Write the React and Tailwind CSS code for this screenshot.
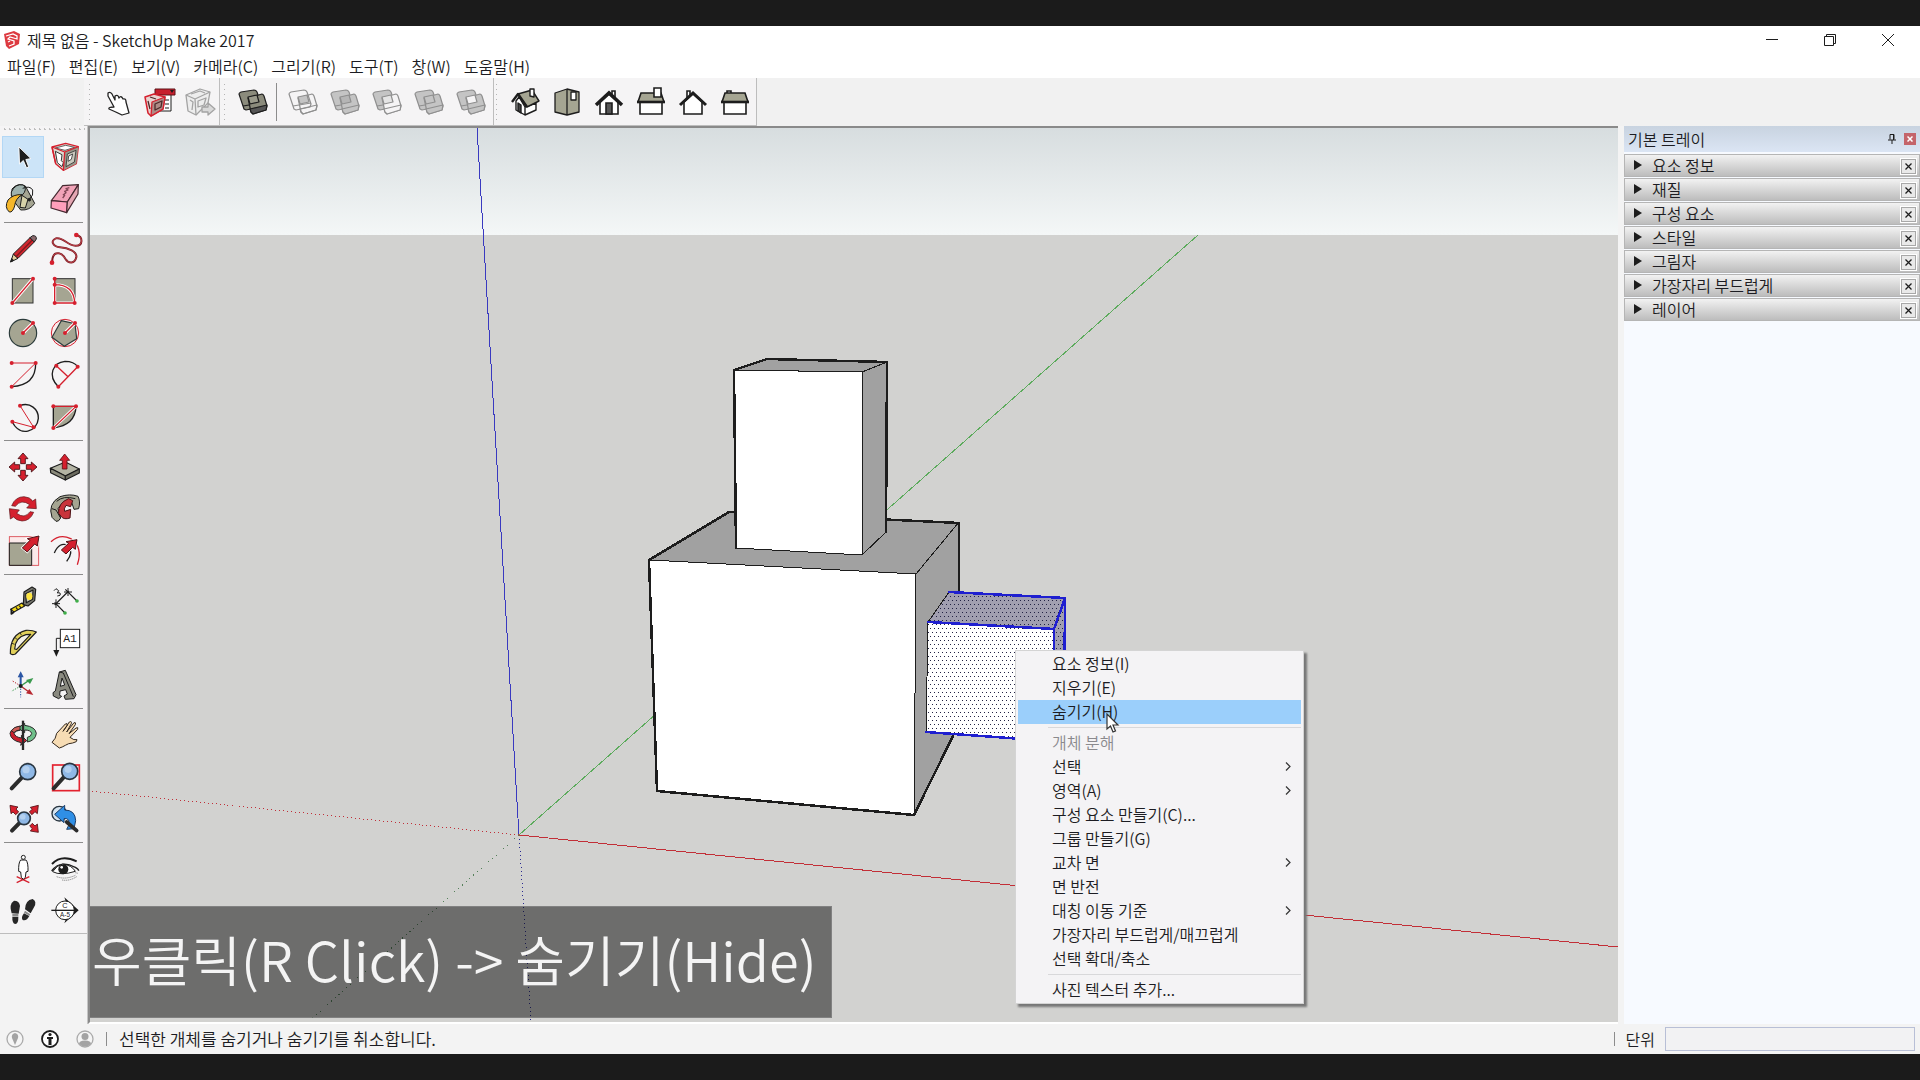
import React from "react";

const RED = "#d5202e";
const INK = "#1d1d1d";
const CLAY = "#a5a592";

/* ---------- Left palette glyphs (drawing units: 3 per pixel) ---------- */

function Dots({ at, r = 6 }) {
  return at.map(([x, y]) => <circle key={x + "-" + y} cx={x} cy={y} r={r} fill={RED} />);
}

const SelectGlyph = (
  <path d="M56 79L58 133L70 122L80 145L87 142L78 119L94 116Z" fill={INK} stroke="#fff" strokeWidth="3" />
);
const ComponentGlyph = (
  <g strokeLinejoin="round">
    <path d="M156 81L197 70L235 80L229 131L190 151L167 131Z" fill="#dddcd2" stroke={RED} strokeWidth="4" />
    <path d="M166 84L197 76L224 82L195 91Z" fill="#fff" stroke="#444" strokeWidth="2.500" />
    <path d="M194 96L235 80L229 131L190 151Z" fill="#97978a" />
    <path d="M202 102L228 91L223 126L198 140Z" fill="#c9c8bd" stroke="#333" strokeWidth="2.500" />
    <path d="M166 94L186 104L184 122L190 128L186 140L172 128Z" fill="#fff" stroke="#333" strokeWidth="3" />
    <path d="M206 108L218 102L214 118L204 124Z" fill="#fff" stroke="#333" strokeWidth="2.500" />
    <path d="M156 81L194 96L235 80M194 96L190 151M156 81L167 131" fill="none" stroke={RED} strokeWidth="4" />
  </g>
);
const PaintGlyph = (
  <g stroke={INK} strokeWidth="3" strokeLinejoin="round">
    <path d="M36 207Q54 186 76 198L104 250Q90 272 62 270L36 236Z" fill="#a5a592" />
    <path d="M34 216Q46 190 70 195Q84 208 66 226Q48 236 34 228Z" fill="#9fb2ae" />
    <path d="M24 240Q40 222 66 224Q46 236 44 258Q38 278 28 276Q12 262 24 240Z" fill="#f5b72b" />
    <path d="M66 226L84 238L76 264L60 262Z" fill="#d6d1a8" />
    <path d="M68 205Q90 196 98 210Q102 226 88 238" fill="none" />
    <circle cx="88" cy="239" r="4" fill={INK} />
  </g>
);
const EraserGlyph = (
  <g stroke="#44282f" strokeWidth="3.500" strokeLinejoin="round">
    <path d="M154 242L188 197L235 194L202 246Z" fill="#f2a3b8" />
    <path d="M154 242L202 246L200 278L153 264Z" fill="#ff9fbb" />
    <path d="M202 246L235 194L234 222L200 278Z" fill="#e5a7b3" />
    <path d="M188 234L194 226L190 224L198 218L194 214L204 210L198 206L208 203" fill="none" stroke="#7e4654" strokeWidth="4" />
  </g>
);
const PencilGlyph = (
  <g stroke={INK} strokeWidth="3" strokeLinejoin="round">
    <path d="M32 426L40 402L54 415Z" fill="#e5cf9c" />
    <path d="M40 402L90 353L103 366L54 415Z" fill="#d0262e" />
    <path d="M48 410L97 360" stroke="#7d1a1f" strokeWidth="4" />
    <path d="M90 353L98 347Q110 346 109 357L103 366Z" fill="#8a6a6d" />
    <path d="M32 426L35 416L41 421Z" fill={INK} />
  </g>
);
const FreehandGlyph = (
  <g>
    <path d="M229 345C250 350 250 378 226 377C200 376 190 350 168 355C150 362 158 380 180 382C205 384 232 395 229 412C224 432 206 432 196 416C186 398 166 394 160 408C156 416 157 422 156 428" fill="none" stroke="#7c1d24" strokeWidth="6" />
    <path d="M229 345C250 350 250 378 226 377C200 376 190 350 168 355C150 362 158 380 180 382C205 384 232 395 229 412C224 432 206 432 196 416C186 398 166 394 160 408" fill="none" stroke="#d9535b" strokeWidth="2" />
    <Dots at={[[229, 345], [156, 428]]} r={7} />
  </g>
);
const LineGlyph = (
  <g>
    <rect x="37" y="476" width="62" height="73" fill={CLAY} stroke="#333" strokeWidth="3" />
    <path d="M37 549L99 476" stroke="#fff" strokeWidth="10" />
    <path d="M37 549L99 476" stroke={RED} strokeWidth="4" />
    <Dots at={[[37, 549], [99, 476]]} />
  </g>
);
const RectGlyph = (
  <g fill="none">
    <rect x="164" y="476" width="61" height="73" fill={CLAY} stroke="#333" strokeWidth="3" />
    <path d="M164 494Q222 494 224 549H164Z" stroke="#fff" strokeWidth="9" />
    <path d="M164 476V549H224Q222 494 164 494" stroke={RED} strokeWidth="4" />
    <Dots at={[[164, 476], [164, 494], [164, 549], [224, 549]]} />
  </g>
);
const CircleGlyph = (
  <g>
    <circle cx="69" cy="639" r="41" fill={CLAY} stroke="#2b3b3b" strokeWidth="3.500" />
    <path d="M69 639L99 609" stroke="#fff" strokeWidth="10" />
    <path d="M69 639L99 609" stroke={RED} strokeWidth="4" />
    <Dots at={[[69, 639], [99, 609]]} />
  </g>
);
const PolygonGlyph = (
  <g>
    <circle cx="195" cy="639" r="41" fill="#fbecec" stroke={RED} strokeWidth="3" />
    <path d="M184 602L225 611L230 656L193 679L156 652Z" fill={CLAY} stroke="#2b3b3b" strokeWidth="3.500" />
    <path d="M195 639L225 609" stroke="#fff" strokeWidth="10" />
    <path d="M195 639L225 609" stroke={RED} strokeWidth="4" />
    <Dots at={[[195, 639], [225, 609]]} />
  </g>
);
const ArcGlyph = (
  <g fill="none">
    <path d="M107 729Q108 796 35 800" stroke={INK} strokeWidth="4" />
    <path d="M35 729H107L35 800" stroke={RED} strokeWidth="3" />
    <Dots at={[[35, 729], [107, 729], [35, 800]]} />
  </g>
);
const Arc2Glyph = (
  <g fill="none">
    <path d="M175 800C140 765 160 728 195 724Q222 724 233 740" stroke={INK} strokeWidth="4" />
    <path d="M175 800L233 740M169 737L204 770" stroke={RED} strokeWidth="4" />
    <Dots at={[[175, 800], [233, 740], [169, 737]]} />
  </g>
);
const Arc3Glyph = (
  <g fill="none">
    <path d="M60 857C90 845 116 868 115 895C112 936 60 952 37 906" stroke={INK} strokeWidth="4" />
    <path d="M60 857L101 922L37 905" stroke={RED} strokeWidth="3" />
    <Dots at={[[60, 857], [101, 922], [37, 905]]} />
  </g>
);
const PieGlyph = (
  <g>
    <path d="M160 859H228Q226 916 160 924Z" fill={CLAY} stroke={INK} strokeWidth="4" />
    <path d="M160 924L228 859" stroke="#fff" strokeWidth="9" />
    <path d="M160 859H228L160 924" stroke={RED} strokeWidth="3.500" fill="none" />
    <Dots at={[[160, 859], [228, 859], [160, 924]]} />
  </g>
);
const MoveGlyph = (
  <g fill={RED} stroke="#3d0c10" strokeWidth="2.500">
    {[0, 90, 180, 270].map((a) => (
      <path key={a} transform={`rotate(${a} 69 111)`} d="M69 69L84 86H76V101H62V86H54Z" />
    ))}
  </g>
);
const PushGlyph = (
  <g stroke={INK} strokeWidth="3.500" strokeLinejoin="round">
    <path d="M151 115L196 96L238 117L196 138Z" fill="#b4b4a4" />
    <path d="M151 115L196 138V150L152 128Z" fill="#8b8b7c" />
    <path d="M196 138L238 117V129L196 150Z" fill="#6c6c60" />
    <path d="M194 72L209 91H201V117H187V91H179Z" fill={RED} stroke="#5b1217" strokeWidth="2.500" />
  </g>
);
const RotateGlyph = (
  <g fill={RED} stroke="#5b1217" strokeWidth="2">
    <path d="M35 227Q46 200 72 200Q90 201 98 213L107 207L109 236L80 234L89 224Q64 206 46 229Z" />
    <path d="M101 247Q90 273 66 273Q48 271 41 261L31 267L28 236L58 240L50 250Q74 268 90 245Z" />
  </g>
);
const FollowGlyph = (
  <g stroke={INK} strokeWidth="3" strokeLinejoin="round">
    <path d="M156 262Q142 222 180 200Q210 190 234 199Q242 214 236 236L222 238L214 214Q188 212 174 236L182 264Q176 276 168 274Z" fill="#a5a592" />
    <path d="M170 214Q190 196 226 206M156 236L168 240L182 264" fill="none" />
    <path d="M176 250Q174 218 206 206L218 212L212 230L198 226Q190 238 194 244L212 238L210 264Q192 270 184 260Z" fill="#c9343b" stroke="#4d1115" strokeWidth="3" />
  </g>
);
const ScaleGlyph = (
  <g>
    <rect x="28" y="320" width="88" height="86" fill="#fbeaea" stroke="#d9434c" strokeWidth="2.500" />
    <path d="M28 339H95V406H28Z" fill={CLAY} stroke={INK} strokeWidth="3" />
    <path d="M117 318L112 348L104 342L82 366L67 354L90 331L82 326Z" fill={RED} stroke="#fff" strokeWidth="7" />
    <path d="M117 318L112 348L104 342L82 366L67 354L90 331L82 326Z" fill={RED} stroke="#4d1115" strokeWidth="3" />
  </g>
);
const OffsetGlyph = (
  <g fill="none">
    <path d="M153 335Q180 310 212 326Q250 352 232 404" stroke={RED} strokeWidth="4" />
    <path d="M163 369Q178 334 204 346Q222 366 200 394" stroke={INK} strokeWidth="4" />
    <path d="M231 329L226 358L218 352L198 372L184 360L206 340L198 335Z" fill={RED} stroke="#fff" strokeWidth="7" />
    <path d="M231 329L226 358L218 352L198 372L184 360L206 340L198 335Z" fill={RED} stroke="#4d1115" strokeWidth="3" />
  </g>
);
const TapeGlyph = (
  <g stroke={INK} strokeWidth="3.500" strokeLinejoin="round">
    <path d="M72 486L96 471L107 478L104 512L84 528L70 524Z" fill="#77776e" />
    <path d="M77 491L99 480L98 508L79 518Z" fill="#c8c8bc" />
    <ellipse cx="88" cy="499" rx="9" ry="11" fill="#ffe640" stroke="none" />
    <path d="M32 538L66 519L74 528L42 546Z" fill="#f2d818" />
    <path d="M34 536V552L42 546" fill="none" strokeWidth="5" />
    <path d="M48 532L53 539M58 527L63 534" />
  </g>
);
const DimensionGlyph = (
  <g fill="none" stroke={INK} strokeWidth="3.500">
    <path d="M164 525L206 483M164 517L195 549M196 478L231 513" />
    <path d="M156 521H180M168 508V534M192 486H216M204 474V498" strokeWidth="3" />
    <path d="M162 482L168 476L176 482L172 489Q184 486 180 496L172 498" strokeWidth="3" />
    <circle cx="195" cy="549" r="5.500" fill="#3fae49" stroke="none" />
    <circle cx="231" cy="513" r="5.500" fill="#3fae49" stroke="none" />
  </g>
);
const ProtractorGlyph = (
  <g stroke={INK} strokeWidth="3.500" strokeLinejoin="round">
    <path d="M31 671Q30 612 78 601Q98 600 109 606L46 672Q36 676 31 671Z" fill="#e0cf5a" />
    <path d="M44 657Q46 622 78 614L92 613L50 658Z" fill="#f4f1ea" />
    <path d="M36 640L44 643M44 622L51 628M60 608L64 615" strokeWidth="2.500" />
  </g>
);
const TextGlyph = (
  <g>
    <rect x="181" y="598" width="58" height="55" fill="#fff" stroke={INK} strokeWidth="3" />
    <text x="210" y="636" textAnchor="middle" fontSize="34" fontFamily="Liberation Mono, monospace" fill={INK}>A1</text>
    <path d="M181 625H169V664" fill="none" stroke={INK} strokeWidth="3" />
    <path d="M160 660H178L169 680Z" fill={INK} />
  </g>
);
const AxesGlyph = (
  <g strokeWidth="4">
    <path d="M62 768V740" stroke="#2b56a5" strokeWidth="6" />
    <path d="M62 724L71 742H53Z" fill="#2b56a5" />
    <path d="M62 768L86 752" stroke="#3a9a4e" />
    <path d="M100 744L90 762L78 750Z" fill="#3a9a4e" />
    <path d="M62 768L84 784" stroke="#b82830" />
    <path d="M100 795L78 790L88 777Z" fill="#b82830" />
    <path d="M62 768L36 752" stroke="#b82830" strokeDasharray="4 4" strokeWidth="3" />
    <path d="M62 768L34 784" stroke="#3a9a4e" strokeDasharray="4 4" strokeWidth="3" />
    <path d="M62 768V802" stroke="#2b56a5" strokeDasharray="4 4" strokeWidth="3" />
    <circle cx="62" cy="768" r="6" fill={INK} />
  </g>
);
const Text3dGlyph = (
  <g stroke={INK} strokeWidth="3" strokeLinejoin="round">
    <path d="M178 726L196 721L228 794L222 806L196 808L192 798L202 792L197 779L180 783L179 796L185 799L176 806L160 798L159 788L166 783Z" fill="#8a8a80" />
    <path d="M186 744L181 769L194 765Z" fill="#f5f4f5" />
    <path d="M178 726L190 729L220 800" fill="none" />
  </g>
);
const OrbitGlyph = (
  <g stroke="#2a2a2a" strokeWidth="3" strokeLinejoin="round">
    <path d="M66 78Q34 82 30 100Q32 122 64 128L62 136L80 122L64 106L65 114Q46 112 42 100Q46 92 62 90Z" fill="#c8202e" />
    <path d="M74 76Q106 80 109 100Q106 122 82 126V112Q94 110 95 100Q92 90 74 90V98L54 84L74 70Z" fill="#6fc08a" />
    <path d="M69 62V150" strokeWidth="7" />
    <path d="M34 92Q42 80 60 78V90Q48 90 42 98Z" fill="#cf5b55" />
  </g>
);
const PanGlyph = (
  <path d="M156 127Q168 116 170 100L196 72Q203 68 202 76L189 94L208 66Q216 62 214 71L200 96L222 68Q229 66 226 74L207 101L228 84Q236 80 233 88L210 112Q222 122 231 119Q233 126 218 129Q204 130 196 136Q186 142 178 144Z" fill="#f7dcb4" stroke="#33281d" strokeWidth="3" strokeLinejoin="round" />
);
function Lens({ cx, cy, r, hx, hy }) {
  return (
    <g>
      <path d={`M${cx - r * 0.7} ${cy + r * 0.7}L${hx} ${hy}`} stroke="#2b2b2b" strokeWidth="12" strokeLinecap="round" />
      <circle cx={cx} cy={cy} r={r} fill="#8fb8e6" stroke="#28343f" strokeWidth="5" />
      <circle cx={cx - r * 0.2} cy={cy - r * 0.25} r={r * 0.45} fill="#b4d0ef" />
    </g>
  );
}
const ZoomGlyph = <Lens cx={83} cy={215} r={24} hx={35} hy={265} />;
const ZoomWindowGlyph = (
  <g>
    <rect x="158" y="195" width="80" height="77" fill="none" stroke="#e3222f" strokeWidth="5" />
    <Lens cx={209} cy={214} r={24} hx={161} hy={265} />
  </g>
);
const ZoomExtentsGlyph = (
  <g>
    <Lens cx={72} cy={355} r={19} hx={36} hy={392} />
    <g fill={RED} stroke="#4d1115" strokeWidth="2.500">
      <path d="M30 316L54 321L48 327L56 336L47 344L39 336L33 341Z" />
      <path d="M115 316L112 341L105 335L96 344L88 336L96 328L91 322Z" />
      <path d="M115 397L91 393L97 386L89 378L97 370L105 378L112 372Z" />
    </g>
  </g>
);
const PreviousGlyph = (
  <g strokeLinejoin="round">
    <circle cx="178" cy="341" r="22" fill="#d3e3f0" stroke="#28343f" strokeWidth="4" />
    <path d="M164 343L194 316V330Q226 330 227 362L222 386L200 388Q212 372 206 360Q200 354 192 356V368Z" fill="#2f8fe6" stroke="#1d3d66" strokeWidth="3" />
    <path d="M200 366L230 392" stroke="#2b2b2b" strokeWidth="11" strokeLinecap="round" />
  </g>
);
const CameraGlyph = (
  <g>
    <path d="M50 548L88 530M50 530L88 548" stroke={RED} strokeWidth="4" />
    <circle cx="70" cy="472" r="6" fill="#fff" stroke={INK} strokeWidth="3" />
    <path d="M62 480H78Q85 488 84 514L78 516L76 532L70 538L64 532L62 516L56 514Q55 488 62 480Z" fill="#fff" stroke={INK} strokeWidth="3" />
  </g>
);
const EyeGlyph = (
  <g fill="none">
    <path d="M156 492Q184 462 230 484" stroke={INK} strokeWidth="6" />
    <path d="M155 513Q180 478 226 502Q236 508 236 512" stroke={INK} strokeWidth="4" />
    <path d="M158 515Q182 528 226 514Q216 496 188 492Q170 496 158 515Z" fill="#fff" stroke={INK} strokeWidth="3" />
    <circle cx="190" cy="508" r="15" fill={INK} />
    <circle cx="185" cy="502" r="4" fill="#fff" />
    <path d="M170 530Q196 540 226 526M186 540Q208 544 230 530M226 518L234 520" stroke="#8b8b8b" strokeWidth="3" strokeDasharray="4 2" />
  </g>
);
const WalkGlyph = (
  <g fill="#262626">
    <path d="M35 640Q26 612 42 602Q58 602 60 618L56 641Z" />
    <path d="M37 650L55 650Q56 670 46 672Q36 670 37 650Z" />
    <path d="M75 628Q76 600 98 597Q112 604 102 622L92 640Z" />
    <path d="M72 640L88 648Q80 664 68 660Q62 652 72 640Z" />
    <path d="M37 642H55V649H37ZM75 632L91 643L88 647L72 638Z" fill="#8a8a8a" />
  </g>
);
const SectionGlyph = (
  <g>
    <path d="M193 592L236 631L193 670L200 650V612Z" fill={INK} />
    <circle cx="195" cy="631" r="28" fill="#fff" stroke={INK} strokeWidth="3" />
    <path d="M154 631H232" stroke={INK} strokeWidth="4" />
    <text x="195" y="625" textAnchor="middle" fontSize="22" fontFamily="Liberation Sans, sans-serif" fill={INK}>C</text>
    <text x="195" y="651" textAnchor="middle" fontSize="19" fontFamily="Liberation Sans, sans-serif" fill={INK}>A-5</text>
  </g>
);

const palette = [
  [
    ["선택", SelectGlyph, "6 48 126 126"], ["구성 요소 만들기", ComponentGlyph, "132 48 126 126"],
    ["페인트 통", PaintGlyph, "6 174 126 126"], ["지우개", EraserGlyph, "132 174 126 126"],
  ],
  [
    ["선", PencilGlyph, "6 324 126 126"], ["자유형", FreehandGlyph, "132 324 126 126"],
    ["직사각형", LineGlyph, "6 450 126 126"], ["회전된 직사각형", RectGlyph, "132 450 126 126"],
    ["원", CircleGlyph, "6 576 126 126"], ["다각형", PolygonGlyph, "132 576 126 126"],
    ["호", ArcGlyph, "6 702 126 126"], ["2점 호", Arc2Glyph, "132 702 126 126"],
    ["3점 호", Arc3Glyph, "6 828 126 126"], ["파이", PieGlyph, "132 828 126 126"],
  ],
  [
    ["이동", MoveGlyph, "6 48 126 126"], ["밀기/끌기", PushGlyph, "132 48 126 126"],
    ["회전", RotateGlyph, "6 174 126 126"], ["따라가기", FollowGlyph, "132 174 126 126"],
    ["배율", ScaleGlyph, "6 300 126 126"], ["오프셋", OffsetGlyph, "132 300 126 126"],
  ],
  [
    ["줄자", TapeGlyph, "6 450 126 126"], ["치수", DimensionGlyph, "132 450 126 126"],
    ["각도기", ProtractorGlyph, "6 576 126 126"], ["텍스트", TextGlyph, "132 576 126 126"],
    ["축", AxesGlyph, "6 702 126 126"], ["3D 텍스트", Text3dGlyph, "132 702 126 126"],
  ],
  [
    ["궤도", OrbitGlyph, "6 42 126 126"], ["이동 보기", PanGlyph, "132 42 126 126"],
    ["확대/축소", ZoomGlyph, "6 168 126 126"], ["창 확대", ZoomWindowGlyph, "132 168 126 126"],
    ["범위 확대", ZoomExtentsGlyph, "6 294 126 126"], ["이전", PreviousGlyph, "132 294 126 126"],
  ],
  [
    ["카메라 배치", CameraGlyph, "6 444 126 126"], ["둘러보기", EyeGlyph, "132 444 126 126"],
    ["걷기", WalkGlyph, "6 570 126 126"], ["단면 평면", SectionGlyph, "132 570 126 126"],
  ],
];

/* ---------- Top toolbar glyphs, centred on 0,0 ---------- */

function Solid({ back, front, mid, line = "#8f8f8f", edge }) {
  return (
    <g stroke={line} strokeWidth="1.200" strokeLinejoin="round">
      <path d="M-14 -8Q-14 -9 -12 -10L1 -12Q3 -12 4 -10L8 2L7 5L-7 8L-9 7Z" fill={back} />
      <path d="M-10 4L8 1" fill="none" />
      <path d="M-5 -4L9 -8Q10 -8 11 -6L14 4L13 8L0 12L-2 10Z" fill={front} />
      <path d="M-3 7L14 3L13 8L0 12L-2 10Z" fill={edge || front} />
      <path d="M-5 -5L4 -7L6 0L-3 2Z" fill={mid} />
    </g>
  );
}

const PointHand = (
  <path d="M-10 -9Q-7 -11 -5 -6L-3 -2L-3 -6Q0 -8 1 -4Q3 -7 5 -3Q8 -4 8 0L11 11L4 13Q-2 10 -9 7Q-10 5 -4 5L-10 -6Z" fill="#fff" stroke="#222" strokeWidth="1.300" strokeLinejoin="round" />
);
const WarehouseIcon = (
  <g strokeLinejoin="round">
    <path d="M0 -8H11V9H0Z" fill="#fff" stroke={INK} />
    <path d="M5 -2H9M5 2H9M5 6H9" stroke={INK} />
    <path d="M-5 -13H15V-7H-5Z" fill="#c8202e" stroke="#5b1217" />
    <path d="M10 -12H14L12 -9Z" fill={INK} />
    <path d="M-15 -5L-6 -8L5 -5L3 7L-9 14L-12 11Z" fill="#e9d3d0" stroke={RED} strokeWidth="1.500" />
    <path d="M-8 0L5 -5L3 7L-9 14Z" fill="#b08a86" stroke={RED} strokeWidth="1.300" />
    <path d="M-5 2L2 -1L1 5L-5 8ZM-12 -1L-10 7M-10 -5L-4 -3" fill="none" stroke="#4c2a2a" strokeWidth="1.300" />
  </g>
);
const WarehouseOffIcon = (
  <g fill="#ededed" stroke="#a3a3a3" strokeWidth="1.300" strokeLinejoin="round">
    <path d="M-14 -7L0 -13L10 -10L8 1L-4 13L-12 9Z" />
    <path d="M-14 -7L-5 -3L10 -10M-5 -3L-4 13M-10 -2L-7 0L-8 8M-9 -8L0 -11L5 -9M-2 -1L6 -4L4 3L-2 5Z" fill="none" />
    <path d="M2 5H8V1L15 7L8 13V10H2Z" fill="#d9d9d9" />
  </g>
);
const HouseIso = (
  <g stroke={INK} strokeWidth="1.400" strokeLinejoin="round">
    <path d="M-9 -1L-6 -5L0 5V13L-9 8ZM0 5L11 1V8L0 13Z" fill="#fff" />
    <path d="M-7 1L-4 3V11L-7 9Z" fill="#444" />
    <path d="M-7 -8L7 -12L14 -1L2 5Z" fill="#a5a592" />
    <path d="M-13 0L-7 -8L2 5" fill="none" strokeWidth="2.400" />
    <path d="M5 -13H9V-5L5 -6Z" fill="#fff" />
  </g>
);
const HouseTop = (
  <g stroke={INK} strokeWidth="1.300" strokeLinejoin="round">
    <path d="M-12 -9L0 -13L12 -10V10L0 13L-12 10Z" fill="#a5a592" />
    <path d="M0 -13V13" />
    <path d="M4 -10H9V-2H4Z" fill="#fff" />
  </g>
);
const HouseFront = (
  <g stroke={INK} strokeWidth="1.600">
    <path d="M3 -11H6V-3H3Z" fill="#fff" />
    <path d="M-9 0L0 -8L9 0V12H-9Z" fill="#fff" />
    <path d="M-3 1H3V12H-3Z" fill="#555" />
    <path d="M-13 3L0 -9L13 3" fill="none" strokeWidth="3.500" />
  </g>
);
const HouseRight = (
  <g stroke={INK} strokeWidth="1.600">
    <path d="M-11 0H11V12H-11Z" fill="#fff" />
    <path d="M-10 -9H10L13 0H-13Z" fill="#a5a592" />
    <path d="M-14 0H14" strokeWidth="2.600" />
    <path d="M3 -14H10V-5H3Z" fill="#fff" />
  </g>
);
const HouseBack = (
  <g stroke={INK} strokeWidth="1.600">
    <path d="M-6 -11H-3V-3H-6Z" fill="#fff" />
    <path d="M-9 0L0 -8L9 0V12H-9Z" fill="#fff" />
    <path d="M-13 3L0 -9L13 3" fill="none" strokeWidth="3" />
  </g>
);
const HouseLeft = (
  <g stroke={INK} strokeWidth="1.600">
    <path d="M-8 -11H-4V-8H-8Z" fill="#fff" />
    <path d="M-11 0H11V12H-11Z" fill="#fff" />
    <path d="M-10 -9H10L13 0H-13Z" fill="#a5a592" />
    <path d="M-14 0H14" strokeWidth="2.600" />
  </g>
);

function ToolButton({ label, children }) {
  return (
    <button aria-label={label} className="flex h-11 w-[42px] items-center justify-center">
      <svg className="size-[42px]" viewBox="-21 -21 42 42">{children}</svg>
    </button>
  );
}

function Handle() {
  return <div className="my-1 mr-[6px] w-[3px] self-stretch bg-[radial-gradient(circle,#b4b4b4_1px,transparent_1px)] bg-size-[3px_5px]" />;
}

function TopToolbar() {
  return (
    <div className="flex h-12 shrink-0 bg-[#f1f1f1] pl-[84px]">
      <div className="flex items-center border-r border-b border-[#bdbdbd] bg-[#f5f4f5] pl-1">
        <Handle />
        <ToolButton label="상호작용">{PointHand}</ToolButton>
        <ToolButton label="3D Warehouse">{WarehouseIcon}</ToolButton>
        <button aria-label="모델 공유" className="flex h-11 w-[38px] items-center justify-center">
          <svg className="h-[42px] w-9" viewBox="-18 -21 36 42">{WarehouseOffIcon}</svg>
        </button>
      </div>
      <div className="flex items-center border-r border-b border-[#bdbdbd] bg-[#f5f4f5] pl-[3px]">
        <Handle />
        <ToolButton label="외부 쉘"><Solid back="#8b8b7c" front="#8b8b7c" mid="#9a9a8b" edge="#555" line={INK} /></ToolButton>
        <div className="mx-[2px] h-[38px] w-px bg-[#8c8c8c]" />
        <div className="flex pr-px pl-[3px]">
          <ToolButton label="교차"><Solid back="none" front="none" mid="#c4c4c4" /></ToolButton>
          <ToolButton label="합집합"><Solid back="#c4c4c4" front="#c4c4c4" mid="#b5b5b5" /></ToolButton>
          <ToolButton label="빼기"><Solid back="#c4c4c4" front="#f5f4f5" mid="#e4e4e4" /></ToolButton>
          <ToolButton label="자르기"><Solid back="#c4c4c4" front="#c4c4c4" mid="#c4c4c4" /></ToolButton>
          <ToolButton label="분할"><Solid back="#c4c4c4" front="#c4c4c4" mid="#f5f4f5" /></ToolButton>
        </div>
      </div>
      <div className="flex items-center border-r border-b border-[#bdbdbd] bg-[#f5f4f5] pl-px">
        <Handle />
        <ToolButton label="등각">{HouseIso}</ToolButton>
        <ToolButton label="위">{HouseTop}</ToolButton>
        <ToolButton label="앞">{HouseFront}</ToolButton>
        <ToolButton label="오른쪽">{HouseRight}</ToolButton>
        <ToolButton label="뒤">{HouseBack}</ToolButton>
        <ToolButton label="왼쪽">{HouseLeft}</ToolButton>
      </div>
    </div>
  );
}

function Palette() {
  return (
    <aside className="w-[88px] shrink-0 border-r border-[#c4c4c4]">
      <div className="border-b border-[#bdbdbd] bg-[#f5f4f5] pb-px">
        <div className="mx-[2px] mb-[3px] h-[7px] bg-[radial-gradient(circle,#bdbdbd_1px,transparent_1px)] bg-size-[5px_7px]" />
        {palette.map((group, g) => (
          <div key={g}>
            {g > 0 && <div className="mx-1 mt-[2px] mb-[5px] h-px bg-[#8c8c8c]" />}
            <div className="grid grid-cols-[42px_42px] pl-[2px]">
              {group.map(([label, glyph, box], i) => (
                <button
                  key={label}
                  aria-label={label}
                  className={g === 0 && i === 0 ? "h-[42px] border border-[#b3d7f5] bg-[#cce4f8]" : "h-[42px]"}
                >
                  <svg className="size-full" viewBox={box}>{glyph}</svg>
                </button>
              ))}
            </div>
          </div>
        ))}
      </div>
    </aside>
  );
}

function Scene() {
  return (
    <svg className="block size-full" viewBox="90 128 1528 894" preserveAspectRatio="xMinYMin slice" shapeRendering="crispEdges">
      <defs>
        <linearGradient id="sky" x1="0" y1="0" x2="0" y2="1">
          <stop offset="0" stopColor="#d7dddf" />
          <stop offset="1" stopColor="#f4f7f7" />
        </linearGradient>
        <pattern id="stipple" width="4" height="8" patternUnits="userSpaceOnUse">
          <rect width="1" height="1" fill="#222244" />
          <rect x="2" y="4" width="1" height="1" fill="#222244" />
        </pattern>
      </defs>
      <rect x="90" y="128" width="1528" height="894" fill="#d2d2d0" />
      <rect x="90" y="128" width="1528" height="107" fill="url(#sky)" />
      <g fill="none" strokeWidth="1">
        <path d="M477 128L519 835" stroke="#3a3ac0" />
        <path d="M519 835L531 1022" stroke="#2a2a90" strokeDasharray="1 3" />
        <path d="M519 835L1198 235" stroke="#5cab5c" />
        <path d="M519 835L468 880L308 1022" stroke="#55805a" strokeDasharray="1 4" />
        <path d="M519 835L1618 947" stroke="#c22e36" />
        <path d="M519 835L90 791" stroke="#c0303a" strokeDasharray="1 3" />
      </g>
      <g strokeLinejoin="round" strokeLinecap="round">
        <path d="M650 560L729 512L959 522L916 574Z" fill="#a1a1a1" />
        <path d="M916 574L959 522L958 725L914 815Z" fill="#a1a1a1" />
        <path d="M650 560L916 574L914 815L657 791Z" fill="#fff" />
        <path d="M650 560L916 574L914 815M916 574L959 522" fill="none" stroke={INK} />
        <path d="M914 815L657 791L649 560L729 512L959 523V592M953 736L914 815" fill="none" stroke={INK} strokeWidth="2.500" />
        <path d="M734 370L767 359L887 362L862 372Z" fill="#a1a1a1" />
        <path d="M862 372L887 362V532L862 555Z" fill="#a1a1a1" />
        <path d="M734 370L862 372V555L736 548Z" fill="#fff" />
        <path d="M734 370L862 372V555L736 548M862 372L887 362M862 555L886 532" fill="none" stroke={INK} />
        <path d="M736 548L734 370L767 359L887 362L886 532" fill="none" stroke={INK} strokeWidth="2.500" />
        <path d="M928 622L949 592L1065 598L1054 629Z" fill="#a19fb0" />
        <path d="M1054 629L1065 598L1064 742H1052Z" fill="#a19fb0" />
        <path d="M928 622L1054 629V742L926 732Z" fill="#fff" />
        <path d="M928 622L949 592L1065 598L1064 742L926 732Z" fill="url(#stipple)" />
        <path d="M949 592L928 622L926 732" fill="none" stroke={INK} />
        <path d="M949 592L1065 598L1064 742L926 732M928 622L1054 629L1065 598M1054 629V742" fill="none" stroke="#1f1fd0" strokeWidth="2.500" />
      </g>
    </svg>
  );
}

const menuItems = [
  { label: "요소 정보(I)" },
  { label: "지우기(E)" },
  { label: "숨기기(H)", active: true },
  null,
  { label: "개체 분해", disabled: true },
  { label: "선택", sub: true },
  { label: "영역(A)", sub: true },
  { label: "구성 요소 만들기(C)..." },
  { label: "그룹 만들기(G)" },
  { label: "교차 면", sub: true },
  { label: "면 반전" },
  { label: "대칭 이동 기준", sub: true },
  { label: "가장자리 부드럽게/매끄럽게" },
  { label: "선택 확대/축소" },
  null,
  { label: "사진 텍스터 추가..." },
];

function ContextMenu() {
  return (
    <div role="menu" className="absolute top-[522px] left-[925px] w-[289px] border border-[#d4d4d4] bg-[#f4f3f5] px-[2px] py-px text-base shadow-[3px_3px_2px_#777]">
      {menuItems.map((item, i) =>
        item === null ? (
          <div key={i} className="mt-[3px] mb-[3px] ml-[30px] h-px bg-[#d8d8da]" />
        ) : (
          <button
            key={i}
            role="menuitem"
            disabled={item.disabled}
            className={
              "flex h-6 w-full items-center justify-between pr-[10px] pb-[2px] pl-[34px] text-left leading-[22px] " +
              (item.active ? "bg-[#9bcffb]" : "") +
              (item.disabled ? "text-[#8a8a8e]" : "")
            }
          >
            <span>{item.label}</span>
            {item.sub && (
              <svg className="h-[9px] w-[6px]" viewBox="0 0 6 9" fill="none" stroke="#333" strokeWidth="1.200">
                <path d="M1 0.500L5 4.500L1 8.500" />
              </svg>
            )}
          </button>
        )
      )}
      <svg className="absolute top-[62px] left-[90px] h-5 w-[14px]" viewBox="0 0 14 20">
        <path d="M1 1V16L4.500 13L7 19L9.500 18L7 12H12Z" fill="#fff" stroke="#333" strokeWidth="1.200" />
      </svg>
    </div>
  );
}

const trays = ["요소 정보", "재질", "구성 요소", "스타일", "그림자", "가장자리 부드럽게", "레이어"];

function Tray() {
  return (
    <aside className="ml-[6px] w-[296px] shrink-0 bg-[#f7faff] text-base">
      <header className="flex h-[26px] items-center bg-linear-to-b from-[#c8d3e0] to-[#dbe5f4] pr-1 pl-1">
        <h2 className="grow leading-6">기본 트레이</h2>
        <button aria-label="자동 숨기기" className="mr-2">
          <svg className="h-[10px] w-2" viewBox="0 0 8 10" fill="none" stroke={INK}>
            <path d="M2 0.500H6V5.500M2 0.500V5.500M0 6H8M4 6V10M5.500 1V6" />
          </svg>
        </button>
        <button aria-label="닫기" className="flex size-3 items-center justify-center bg-[#c4646a]">
          <svg className="size-[6px]" viewBox="0 0 6 6" stroke="#fff" strokeWidth="1.500"><path d="M0.500 0.500L5.500 5.500M5.500 0.500L0.500 5.500" /></svg>
        </button>
      </header>
      <div className="flex flex-col gap-px pt-[2px]">
        {trays.map((name) => (
          <div key={name} className="flex h-[23px] items-center border border-[#b5b5b5] bg-linear-to-b from-[#f2f2f2] to-[#bdbdbd] pr-[2px] pl-[9px]">
            <button className="flex grow items-center gap-[10px] pb-px text-left leading-5">
              <svg className="h-[10px] w-2" viewBox="0 0 8 10"><path d="M0 0L8 5L0 10Z" fill={INK} /></svg>
              {name}
            </button>
            <button aria-label={name + " 닫기"} className="mt-px flex size-[17px] items-center justify-center border border-white bg-[#e9e9e9] outline outline-offset-[-2px] outline-[#a8a8a8]">
              <svg className="size-[7px]" viewBox="0 0 7 7" stroke={INK} strokeWidth="1.300"><path d="M0.500 0.500L6.500 6.500M6.500 0.500L0.500 6.500" /></svg>
            </button>
          </div>
        ))}
      </div>
    </aside>
  );
}

const menus = ["파일(F)", "편집(E)", "보기(V)", "카메라(C)", "그리기(R)", "도구(T)", "창(W)", "도움말(H)"];

export default function App() {
  return (
    <div className="flex h-screen flex-col overflow-hidden bg-[#1b1b1b] py-[26px] font-['Noto_Sans_CJK_KR',sans-serif] font-[350] text-[#1c1c22]">
      <div className="flex min-h-0 grow flex-col bg-[#f3f3f3]">
        <header className="flex h-7 shrink-0 items-center bg-white pl-1 text-base">
          <svg className="mr-[7px] h-[18px] w-4" viewBox="0 0 16 18">
            <path d="M0 3L10 0L16 3L15 13L5 18L2 15Z" fill="#dd3a40" />
            <path d="M2 5L9 3L13 5V8L6 6L4 8L10 10V13L5 15M6 10L4 11" fill="none" stroke="#fff" strokeWidth="1.300" />
          </svg>
          <h1 className="grow leading-7">제목 없음 - SketchUp Make 2017</h1>
          <div className="flex items-center gap-[46px] pr-[26px]">
            <button aria-label="최소화"><svg className="size-3" viewBox="0 0 12 12" stroke={INK}><path d="M0 5.500H12" /></svg></button>
            <button aria-label="이전 크기로"><svg className="size-3" viewBox="0 0 12 12" fill="none" stroke={INK}><path d="M0.500 2.500H9.500V11.500H0.500ZM2.500 2.500V0.500H11.500V9.500H9.500" /></svg></button>
            <button aria-label="닫기"><svg className="size-3" viewBox="0 0 12 12" stroke={INK}><path d="M0 0L12 12M12 0L0 12" /></svg></button>
          </div>
        </header>
        <nav className="flex h-6 shrink-0 items-center gap-[13px] bg-white pl-[7px] text-base">
          {menus.map((m) => (
            <button key={m} className="leading-6">{m}</button>
          ))}
        </nav>
        <TopToolbar />
        <div className="flex min-h-0 grow">
          <Palette />
          <main className="relative min-w-0 grow overflow-hidden border-t-2 border-b-2 border-l-2 border-t-[#8a8a8a] border-b-white border-l-[#8a8a8a]">
            <Scene />
            <div className="absolute bottom-1 left-[-2px] border border-[#8f8f8f]/60 bg-[#080808]/50 pt-3 pr-[14px] pb-[18px] pl-[3px] text-[54px] leading-[80px] whitespace-nowrap text-[#f4f4f4]">
              우클릭(R Click) -&gt; 숨기기(Hide)
            </div>
            <ContextMenu />
          </main>
          <Tray />
        </div>
        <footer className="flex h-[30px] shrink-0 items-center pl-[6px] text-[17px]">
          <div className="flex gap-[17px]">
            <button aria-label="위치">
              <svg className="size-[18px]" viewBox="0 0 18 18"><circle cx="9" cy="9" r="8" fill="#f5f5f5" stroke="#ababab" strokeWidth="1.300" /><path d="M9 15L6 8Q5 4 9 3Q13 4 12 8Z" fill="#a3a3a3" /></svg>
            </button>
            <button aria-label="크레딧">
              <svg className="size-[18px]" viewBox="0 0 18 18"><circle cx="9" cy="9" r="8" fill="#fff" stroke={INK} strokeWidth="1.800" /><circle cx="9" cy="4.500" r="1.600" fill={INK} /><path d="M6 7H12V9H10.500V15H7.500V9H6Z" fill={INK} /></svg>
            </button>
            <button aria-label="로그인">
              <svg className="size-[18px]" viewBox="0 0 18 18"><circle cx="9" cy="9" r="8" fill="#f5f5f5" stroke="#ababab" strokeWidth="1.300" /><circle cx="9" cy="6.500" r="3.500" fill="#a3a3a3" /><path d="M3 14Q3 10.500 9 10.500Q15 10.500 15 14Q9 19 3 14Z" fill="#a3a3a3" /></svg>
            </button>
          </div>
          <div className="mx-3 h-[14px] w-px bg-[#8c8c8c]" />
          <p className="grow leading-6">선택한 개체를 숨기거나 숨기기를 취소합니다.</p>
          <div className="mr-[11px] h-[14px] w-px bg-[#8c8c8c]" />
          <label htmlFor="measure" className="mr-[10px] text-base leading-6">단위</label>
          <input id="measure" className="mr-[5px] h-6 w-[250px] border border-[#b8bfd6] bg-[#f2f2f3] px-1" />
        </footer>
      </div>
    </div>
  );
}
